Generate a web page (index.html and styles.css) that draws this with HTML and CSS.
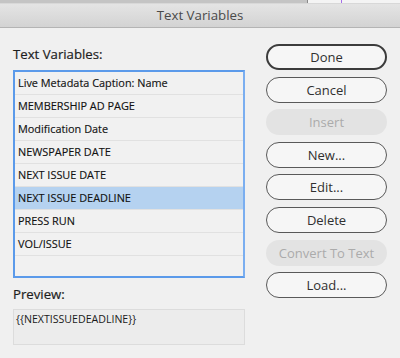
FILE: index.html
```html
<!DOCTYPE html>
<html>
<head>
<meta charset="utf-8">
<link rel="stylesheet" href="styles.css">
</head>
<body>
<div class="backdrop">
  <div class="bd-left"></div>
  <div class="bd-right"><span class="bd-mark"></span></div>
</div>
<div class="titlebar">Text Variables</div>
<div class="dialog">
  <div class="left">
    <div class="label">Text Variables:</div>
    <div class="list">
      <div class="row">Live Metadata Caption: Name</div>
      <div class="row">MEMBERSHIP AD PAGE</div>
      <div class="row">Modification Date</div>
      <div class="row">NEWSPAPER DATE</div>
      <div class="row">NEXT ISSUE DATE</div>
      <div class="row selected">NEXT ISSUE DEADLINE</div>
      <div class="row">PRESS RUN</div>
      <div class="row">VOL/ISSUE</div>
      <div class="row empty"></div>
    </div>
    <div class="label preview-label">Preview:</div>
    <div class="preview">{{NEXTISSUEDEADLINE}}</div>
  </div>
  <div class="buttons">
    <div class="btn default">Done</div>
    <div class="btn">Cancel</div>
    <div class="btn disabled">Insert</div>
    <div class="btn">New...</div>
    <div class="btn">Edit...</div>
    <div class="btn">Delete</div>
    <div class="btn disabled">Convert To Text</div>
    <div class="btn">Load...</div>
  </div>
</div>
</body>
</html>
```
FILE: styles.css
```css
html, body {
  margin: 0;
  padding: 0;
  background: #f0f0f0;
  width: 400px;
  height: 358px;
  overflow: hidden;
  font-family: "Open Sans", "DejaVu Sans", sans-serif;
}
.backdrop {
  display: flex;
  height: 3px;
}
.bd-left {
  width: 307px;
  background: #c4c4c4;
  border-right: 1px solid #8a8a8a;
}
.bd-right {
  flex: 1;
  background: #f4f4f4;
  position: relative;
}
.bd-mark {
  position: absolute;
  left: 33px;
  top: 0;
  width: 1px;
  height: 3px;
  background: #a56ee8;
}
.titlebar {
  height: 23px;
  line-height: 23px;
  text-align: center;
  font-size: 13.3px;
  color: #4a4a4a;
  background: linear-gradient(#e4e4e4, #d3d3d3);
  border-top: 1px solid #d8d8d8;
  border-bottom: 1px solid #b4b4b4;
}
.dialog {
  display: flex;
  padding: 0 13px 0 13px;
}
.left {
  width: 232px;
  display: flex;
  flex-direction: column;
}
.label {
  font-size: 13.2px;
  line-height: 16px;
  color: #1e1e1e;
  margin-top: 18px;
  margin-bottom: 8px;
  -webkit-text-stroke: 0.2px #1e1e1e;
}
.list {
  height: 204px;
  border: 2px solid #5b9aea;
  border-right-color: #7aaef0;
  background: #f1f1f1;
}
.row {
  height: 22px;
  line-height: 22px;
  border-bottom: 1px solid #e1e1e1;
  padding-left: 3px;
  font-size: 10.9px;
  color: #121212;
  white-space: nowrap;
  -webkit-text-stroke: 0.15px #121212;
}
.row.selected {
  background: #b5d2f0;
}
.row.empty {
  border-bottom: none;
}
.preview-label {
  margin-top: 8px;
  margin-bottom: 7px;
}
.preview {
  height: 36px;
  border: 1px solid #dcdcdc;
  background: #ececec;
  font-size: 10.6px;
  line-height: 14px;
  padding: 2px 2px;
  box-sizing: border-box;
  color: #1a1a1a;
}
.buttons {
  margin-left: 21px;
  width: 121px;
  padding-top: 16px;
  display: flex;
  flex-direction: column;
  gap: 6.6px;
}
.btn {
  height: 26px;
  box-sizing: border-box;
  border: 1.5px solid #595959;
  border-radius: 13px;
  background: #f6f6f6;
  font-size: 13px;
  color: #303030;
  display: flex;
  align-items: center;
  justify-content: center;
}
.btn.default {
  border: 2px solid #3c3c3c;
}
.btn.disabled {
  border: none;
  background: #e3e3e3;
  color: #ababab;
}
```
